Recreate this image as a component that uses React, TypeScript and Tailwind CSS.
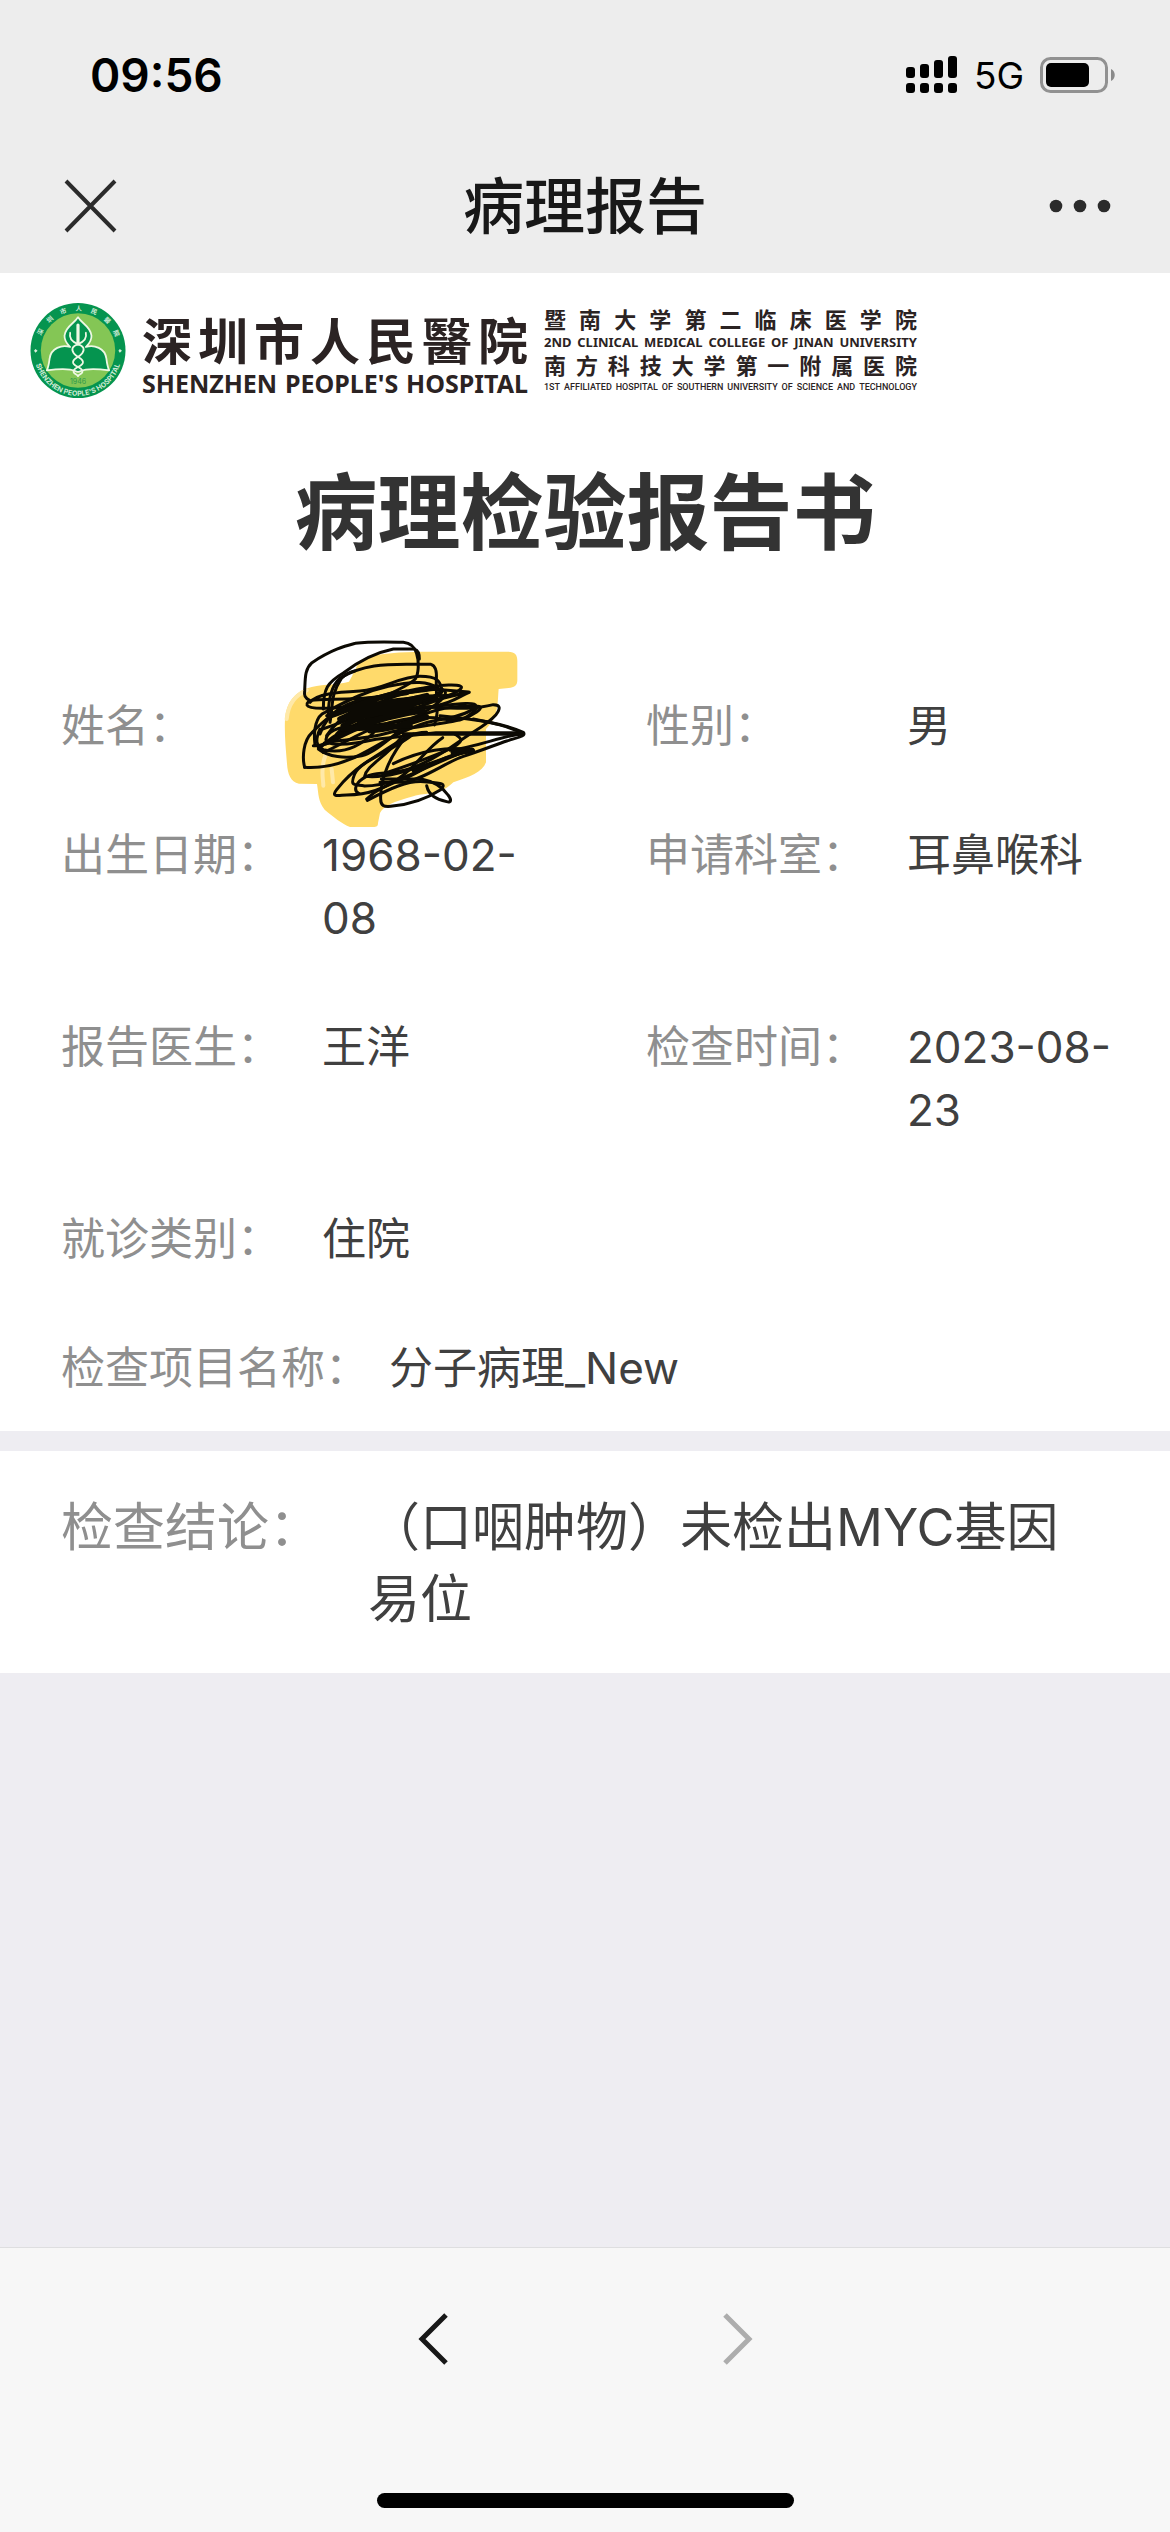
interface FieldProps {
  label: string
  value: string
}

const fields: FieldProps[] = [
  { label: "出生日期：", value: "1968-02-08" },
  { label: "申请科室：", value: "耳鼻喉科" },
  { label: "报告医生：", value: "王洋" },
  { label: "检查时间：", value: "2023-08-23" },
  { label: "就诊类别：", value: "住院" },
]

function Spread({ text, by = "", className }: { text: string; by?: string; className: string }) {
  return (
    <div className={`flex justify-between whitespace-nowrap ${className}`}>
      {text.split(by).map((part, i) => (
        <span key={i}>{part}</span>
      ))}
    </div>
  )
}

function StatusBar() {
  return (
    <div className="flex h-[150px] items-center justify-between pl-[90px] pr-[54px]">
      <span className="text-[46px] font-semibold leading-none text-black">09:56</span>
      <div className="flex items-center">
        <svg className="h-[38px] w-[52px]" viewBox="0 0 52 38" aria-hidden="true">
          <rect x="0" y="11" width="9" height="11" rx="3" />
          <rect x="14" y="8" width="9" height="14" rx="3" />
          <rect x="28" y="4" width="9" height="18" rx="3" />
          <rect x="42" y="0" width="9" height="22" rx="3" />
          <rect x="0" y="27" width="9" height="10" rx="3" />
          <rect x="14" y="27" width="9" height="10" rx="3" />
          <rect x="28" y="27" width="9" height="10" rx="3" />
          <rect x="42" y="27" width="9" height="10" rx="3" />
        </svg>
        <span className="ml-4 text-[37px] leading-none text-black">5G</span>
        <svg className="ml-4 h-9 w-[76px]" viewBox="0 0 76 36" aria-hidden="true">
          <rect x="1.5" y="1.5" width="65" height="33" rx="9" fill="none" stroke="#919191" strokeWidth="3" />
          <rect x="6" y="6" width="43" height="24" rx="5" />
          <path d="M71 12c5 2 5 10 0 12z" fill="#8a8a8a" />
        </svg>
      </div>
    </div>
  )
}

function NavBar() {
  return (
    <div className="flex h-[123px] items-center justify-between px-[58px] pb-3">
      <button type="button" aria-label="关闭" className="flex w-16 items-center justify-start">
        <svg className="h-16 w-16" viewBox="0 0 64 64" fill="none" stroke="#2b2b2b" strokeWidth="4">
          <path d="M8 7 57 57M57 7 8 57" />
        </svg>
      </button>
      <h1 className="pt-1 text-[61px] font-medium leading-none text-[#181818]">病理报告</h1>
      <button type="button" aria-label="更多" className="flex w-16 items-center justify-end">
        <svg className="h-4 w-16" viewBox="0 0 64 16" fill="#2b2b2b">
          <circle cx="8" cy="8" r="6.3" />
          <circle cx="32" cy="8" r="6.3" />
          <circle cx="56" cy="8" r="6.3" />
        </svg>
      </button>
    </div>
  )
}

function Emblem() {
  return (
    <svg className="h-[95px] w-[96px] shrink-0" viewBox="0 0 268 268" aria-hidden="true">
      <defs>
        <path id="ringTop" d="M22 134a112 112 0 0 1 224 0" />
        <path id="ringBottom" d="M10 138a124 124 0 0 0 248 0" />
      </defs>
      <circle cx="134" cy="134" r="134" fill="#05944f" />
      <circle cx="134" cy="134" r="105" fill="#84c655" />
      <g fill="#cfeBd6" fontSize="18" fontWeight="700">
        <text>
          {["深", "圳", "市", "人", "民", "醫", "院"].map((char, i) => (
            <textPath key={char} href="#ringTop" startOffset={`${12 + i * 12}%`}>
              {char}
            </textPath>
          ))}
        </text>
        <text textAnchor="middle" fontSize="20">
          <textPath href="#ringBottom" startOffset="50%">SHENZHEN PEOPLE'S HOSPITAL</textPath>
        </text>
      </g>
      <path d="M14 130l6 5-6 5-4-5zM252 130l6 5-6 5-4-5z" fill="#d9efdc" />
      <path
        d="M134 40c-10 18-36 26-38 52-1 16 8 24 16 32-24-8-54 4-58 32-2 16-4 26-8 34 30-4 64-6 80 2 5 3 11 3 16 0 16-8 50-6 80-2-4-8-6-18-8-34-4-28-34-40-58-32 8-8 17-16 16-32-2-26-28-34-38-52z"
        fill="#05944f"
        stroke="#eef8e4"
        strokeWidth="5"
        strokeLinejoin="round"
      />
      <g fill="none" stroke="#eef8e4" strokeLinecap="round">
        <path d="M134 62v54" strokeWidth="9" />
        <path d="M112 84c-4 16 6 26 22 32s20 14 12 26-24 12-26 24 22 14 26 24-8 10-12 16" strokeWidth="5" />
        <path d="M156 84c4 16-6 26-22 32s-20 14-12 26 24 12 26 24-22 14-26 24 8 10 12 16" strokeWidth="5" />
      </g>
      <text x="134" y="228" textAnchor="middle" fontSize="20" fill="#2f9a4c">
        1946
      </text>
    </svg>
  )
}

function HospitalLogo() {
  return (
    <div className="flex items-center pl-[30px] pt-[30px]">
      <Emblem />
      <div className="ml-4 w-[386px] font-bold text-[#2b2323]">
        <Spread
          text="深圳市人民醫院"
          className="font-['Noto_Sans_CJK_TC',sans-serif] text-[50px] leading-[64px]"
        />
        <Spread
          text="SHENZHEN PEOPLE'S HOSPITAL"
          by=" "
          className="font-['Noto_Sans',sans-serif] text-[25px] leading-[26px]"
        />
      </div>
      <div className="ml-4 w-[373px] text-[#2b2323]">
        <Spread text="暨南大学第二临床医学院" className="text-[22px] font-bold leading-[25px]" />
        <Spread
          text="2ND CLINICAL MEDICAL COLLEGE OF JINAN UNIVERSITY"
          by=" "
          className="font-['Noto_Sans',sans-serif] text-[13px] font-bold leading-[19px]"
        />
        <Spread text="南方科技大学第一附属医院" className="text-[22px] font-bold leading-[28px]" />
        <Spread
          text="1ST AFFILIATED HOSPITAL OF SOUTHERN UNIVERSITY OF SCIENCE AND TECHNOLOGY"
          by=" "
          className="font-[Roboto,sans-serif] text-[9px] font-medium leading-[14px]"
        />
      </div>
    </div>
  )
}

function Scribble() {
  return (
    <svg className="absolute -left-[62px] -top-[76px] h-[230px] w-[300px]" viewBox="0 0 900 690" aria-label="已涂抹">
      <path
        d="M75 300c4-50 30-84 80-96 40-10 80-6 112-16 20-30 20-62 60-76 60-12 120-14 180-14h235c24 0 30 10 30 28v58c0 16-10 22-26 23l-30 3c-4 40 2 80-38 120v100c-10 30-50 44-98 60-40 40-80 30-120 42-60 16-90 30-100 50l-6 30c0 10-4 12-14 12h-70c-24-10-50-30-76-52-20-26-18-46-23-77l-54-1c-26-6-34-30-36-60-4-50-8-90-6-134z"
        fill="#ffda6b"
      />
      <path d="M80 300c4-40 20-70 60-86M190 500c0-20-10-50 6-90M215 450l4 40" fill="none" stroke="#ffe9a8" strokeWidth="12" strokeLinecap="round" />
      <g fill="none" stroke="#0c0a04" strokeWidth="9" strokeLinecap="round" strokeLinejoin="round">
        <path d="M150 245c-16-8-18-16-16-30 2-40 0-64 22-84 60-40 100-50 130-58 50-6 100-4 144-3 24 2 34 14 40 34 8 24 6 60-4 76-20 20-50 30-90 52L200 290" />
        <path d="M190 270c0-60 12-80 60-108 60-46 110-64 150-72h62c14 4 16 14 16 30" />
        <path d="M205 290c0-50 10-90 34-112 70-42 140-42 200-42h74c14 4 18 20 16 46-2 60 10 100-6 136" />
        <path d="M210 310c10-50 0-80 34-132 20-20 30-20 40-22" />
        <path d="M150 250c20-26 80-30 150-34s120-44 180-44 60 20 66 40-60 40-120 40-180 16-240 16-50-18-30-24 120 0 190-10 150-34 220-36 30 20-6 34-140 34-220 50" />
        <path d="M165 380c-6-50 4-90 30-100 60-30 110-60 190-78s120-14 150 6-90 50-160 74-150 60-190 100" />
        <path d="M134 445c-8-30-4-80 22-104 30-30 70-70 130-90s160-30 240-40l100 8-80 20-200 70c-60 20-110 50-150 66" />
        <path d="M134 445c60 4 120-10 190-50s140-80 200-90 100-20 120-40-60-10-110-4-140 20-200 40-110 60-160 82" />
        <path d="M175 390c30 24 80 30 130 20s120-90 180-120 140-30 168-28-20 30-50 40-150 20-220 40-150 20-190 30" />
        <path d="M180 345c20-60 70-100 170-110s150-30 190-24 0 40-50 70-140 40-200 40-90 20-92 40 60 20 150 0l180-20h260" />
        <path d="M540 290c100 10 180 20 250 50 10 12-20 16-50 26s-80 30-130 46-120 70-180 78h-70" />
        <path d="M640 300c60 12 100 20 150 44-60 6-140 40-220 50" />
        <path d="M500 265c60 0 130 10 200-8 24 0 20 14 8 30-30 34-70 50-110 80s-120 80-180 90-70 0-100 16-40 40-22 50" />
        <path d="M500 340c-60 0-100 40-160 76s-90 70-110 96 10 16 30 16c60 0 120-20 170-60s70-80 118-112" />
        <path d="M460 345c-60 50-160 80-176 120s0 30 30 36c100 0 200-70 320-110" />
        <path d="M420 360c-50 60-100 80-106 112 100 10 200-50 326-78-70-14-160 0-240 40" />
        <path d="M368 465c60-20 120-40 190-70s40-40 26-50" />
        <path d="M440 350c-50 60-80 130-78 190 0 20 10 24 30 22 60-6 110-24 150-50 20-20 0-20-50-24s-100 20-170 56" />
        <path d="M500 500c6 30 30 40 60 48 16 4 14-8 4-20-16-24-40-40-80-48h-120" />
        <path d="M320 540c30-30 60-40 120-64s100-70 200-80c-60 4-120 40-180 60" />
        <path d="M160 380c80 0 100-60 180-90s140-20 190-30 70-30 98-40c-80 20-120 0-190 20s-160 60-250 90" />
        <path d="M190 400c50-20 110-60 170-80s130-30 190-20 80-10 104-36" />
        <path d="M180 330c-14 30-14 50 10 62 60 14 110-10 150-50M200 350c40-60 120-110 200-130M230 345c60-70 160-120 280-140" />
      </g>
      <g fill="none" stroke="#0c0a04" strokeWidth="17" strokeLinecap="round">
        <path d="M210 290c70-20 130-60 230-70M250 320c60-30 120-60 250-90M270 300c60-10 120-50 210-60M290 325c60-20 120-40 200-50M240 300c90-40 180-30 240-55M300 310c80-10 120-30 170-60M330 335c60-4 100-20 170-40M280 275c60-20 110-30 180-34M320 290l130-30M250 330l200-10M580 400l56-6" />
      </g>
      <path d="M430 345l360 0" stroke="#0c0a04" strokeWidth="10" strokeLinecap="round" />
    </svg>
  )
}

function Field({ label, value }: FieldProps) {
  return (
    <div className="flex w-1/2 pb-[31px] pl-[61px] pr-[30px] pt-[35px]">
      <dt className="w-[261px] shrink-0 text-[#8f8f8f]">{label}</dt>
      <dd className="min-w-0 flex-1">{value}</dd>
    </div>
  )
}

export default function App() {
  return (
    <div className="flex min-h-screen flex-col bg-[#eeedf2] font-[Inter,'Noto_Sans_CJK_SC',sans-serif] text-[#404040]">
      <header className="bg-[#ededed]">
        <StatusBar />
        <NavBar />
      </header>

      <main className="flex-1">
        <section className="bg-white">
          <HospitalLogo />
          <h2 className="pb-[82px] pt-[50px] text-center text-[83px] font-bold leading-[130px] text-[#333333]">
            病理检验报告书
          </h2>
          <dl className="flex flex-wrap text-[44px] leading-[63px]">
            <div className="flex w-1/2 pb-[31px] pl-[61px] pr-[30px] pt-[35px]">
              <dt className="w-[261px] shrink-0 text-[#8f8f8f]">姓名：</dt>
              <dd className="relative flex-1">
                <Scribble />
              </dd>
            </div>
            <Field label="性别：" value="男" />
            {fields.map((field) => (
              <Field key={field.label} {...field} />
            ))}
            <div className="flex w-full gap-5 pb-[31px] pl-[61px] pt-[35px]">
              <dt className="text-[#8f8f8f]">检查项目名称：</dt>
              <dd>分子病理_New</dd>
            </div>
          </dl>
        </section>

        <section className="mt-5 bg-white pb-[37px] pl-[61px] pr-[96px] pt-[41px]">
          <dl className="flex text-[52px] leading-[72px]">
            <dt className="w-[307px] shrink-0 text-[#8f8f8f]">检查结论：</dt>
            <dd className="flex-1">（口咽肿物）未检出MYC基因易位</dd>
          </dl>
        </section>
      </main>

      <footer className="flex flex-col items-center border-t border-[#dedee0] bg-[#f7f7f7] pb-6">
        <div className="flex h-[182px] items-center gap-[239px]">
          <button type="button" aria-label="后退">
            <svg className="h-16 w-16" viewBox="0 0 64 64" fill="none" stroke="#181818" strokeWidth="5">
              <path d="M44 8 20 32l24 24" />
            </svg>
          </button>
          <button type="button" aria-label="前进" disabled>
            <svg className="h-16 w-16" viewBox="0 0 64 64" fill="none" stroke="#adadad" strokeWidth="5">
              <path d="M20 8l24 24-24 24" />
            </svg>
          </button>
        </div>
        <div className="mt-[63px] h-[15px] w-[417px] rounded-full bg-black" />
      </footer>
    </div>
  )
}
